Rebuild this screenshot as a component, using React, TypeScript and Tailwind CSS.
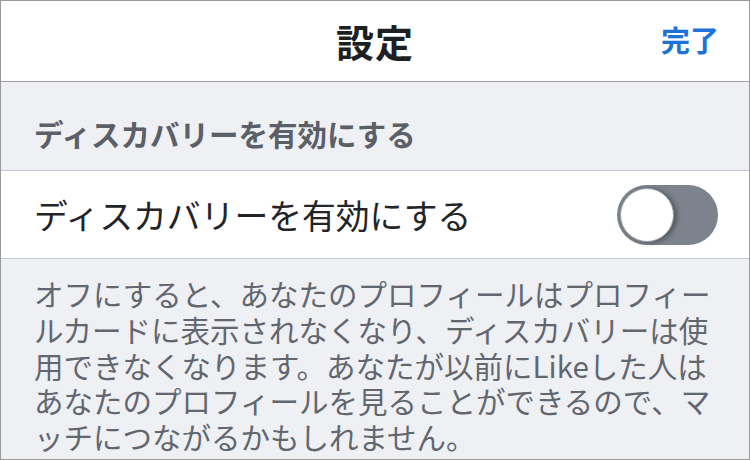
import React from "react";

const font = { fontFamily: '"Noto Sans CJK JP", "Noto Sans", sans-serif' };

function Toggle({ on }: { on: boolean }) {
  return (
    <div
      className={`relative h-[60px] w-[101px] rounded-full ${on ? "bg-[#34c759]" : "bg-[#7d838c]"}`}
    >
      <div className="absolute left-[3px] top-[3px] h-[54px] w-[54px] rounded-full border border-[#9aa0a8] bg-white shadow-[3px_1px_5px_rgba(0,0,0,0.35)]" />
    </div>
  );
}

export default function App() {
  return (
    <div
      className="flex h-[460px] w-[750px] flex-col overflow-hidden border border-[#9a9a9a] bg-[#eff0f4]"
      style={font}
    >
      {/* nav bar */}
      <div className="relative flex h-[81px] shrink-0 items-center justify-center border-b border-[#a3a3a3] bg-white">
        <h1 className="text-[38px] font-bold leading-none tracking-[1px] text-[#1d1f23]">設定</h1>
        <button className="absolute right-[30px] top-[24px] text-[29px] font-bold leading-none text-[#1b72d8]">
          完了
        </button>
      </div>

      {/* section header */}
      <div className="flex h-[88px] shrink-0 items-end px-[33px] pb-[22px]">
        <span className="text-[29.5px] font-bold leading-none text-[#5b6068]">
          ディスカバリーを有効にする
        </span>
      </div>

      {/* switch row */}
      <div className="flex h-[89px] shrink-0 items-center justify-between border-y border-[#c3c7ce] bg-white pl-[33px] pr-[31px]">
        <span className="text-[33.8px] leading-none text-[#222428]">ディスカバリーを有効にする</span>
        <Toggle on={false} />
      </div>

      {/* footer note */}
      <p className="px-[33px] pt-[17px] text-[29.5px] leading-[35.8px] text-[#62676f]">
        オフにすると、あなたのプロフィールはプロフィールカードに表示されなくなり、ディスカバリーは使用できなくなります。あなたが以前にLikeした人はあなたのプロフィールを見ることができるので、マッチにつながるかもしれません。
      </p>
    </div>
  );
}
